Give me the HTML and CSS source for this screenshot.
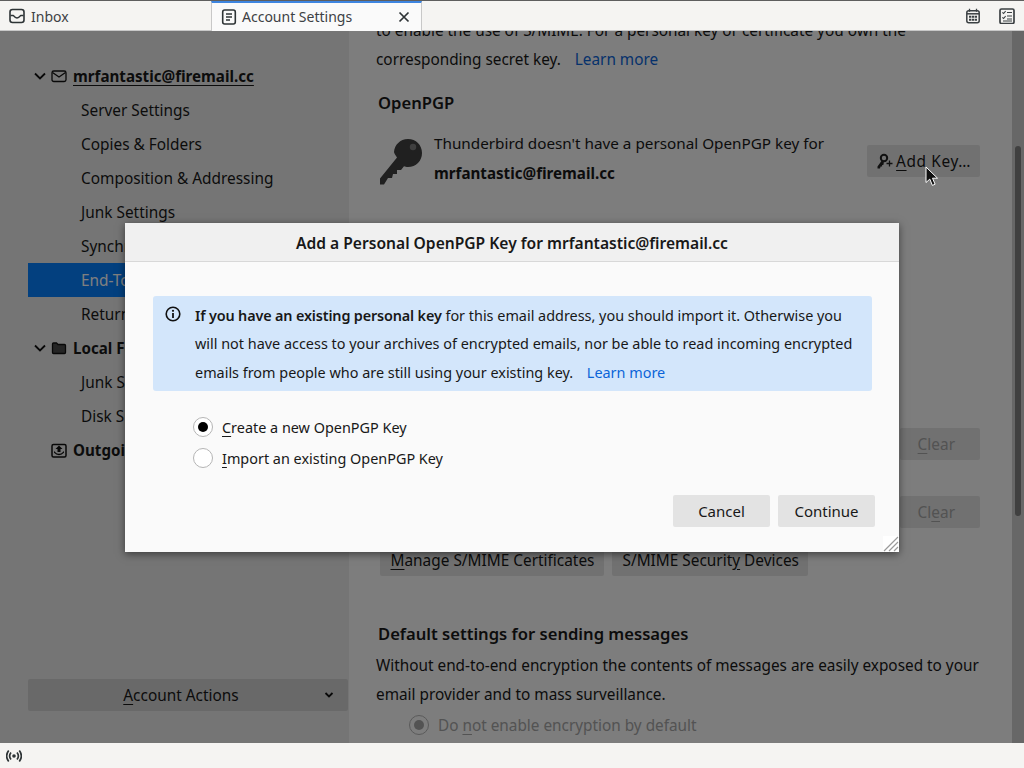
FILE: index.html
```html
<!DOCTYPE html>
<html>
<head>
    <title>Account Settings</title>
    <link rel="stylesheet" href="styles.css">
</head>
<body>
    <div class="tabbar">
        <div class="tab">
            <svg class="tab-icon" width="16" height="16" viewBox="0 0 16 16"><rect x="1" y="1.500" width="14" height="13" rx="2.500" fill="none" stroke="#2e3436" stroke-width="1.600"/><path d="M1.500 7.500h2.700c.8 0 1 2.500 3.800 2.500s3-2.500 3.800-2.500h2.700" fill="none" stroke="#2e3436" stroke-width="1.500"/></svg>
            <span>Inbox</span>
        </div>
        <div class="tab tab-active">
            <svg class="tab-icon" width="16" height="16" viewBox="0 0 16 16"><rect x="1.700" y="1" width="12.600" height="14" rx="2" fill="none" stroke="#2e3436" stroke-width="1.600"/><path d="M5 5h6M5 8h6M5 11h4" stroke="#2e3436" stroke-width="1.400"/></svg>
            <span class="tab-title">Account Settings</span>
            <svg class="tab-close" width="12" height="12" viewBox="0 0 12 12"><path d="M1.500 1.500l9 9M10.500 1.500l-9 9" stroke="#2e3436" stroke-width="1.700"/></svg>
        </div>
        <div class="tab-tools">
            <svg width="16" height="16" viewBox="0 0 16 16"><rect x="1.800" y="2.800" width="12.400" height="12" rx="2" fill="none" stroke="#3b4043" stroke-width="1.500"/><path d="M2 5.800h12" stroke="#3b4043" stroke-width="1.500"/><path d="M4.500 .8v3M11.500 .8v3" stroke="#3b4043" stroke-width="1.300"/><path d="M4 7.800h2.300v2H4zM6.900 7.800h2.300v2H6.900zM9.800 7.800H12v2H9.800zM4 10.700h2.300v2H4zM6.900 10.700h2.300v2H6.900zM9.800 10.700H12v2H9.800z" fill="#3b4043"/></svg>
            <svg width="16" height="16" viewBox="0 0 16 16"><rect x="1" y="1" width="14" height="14.500" rx="1.500" fill="none" stroke="#3b4043" stroke-width="1.700"/><path d="M3.400 4.300l1.200 1.200 2-2.300M3.400 9.300l1.200 1.200 2-2.300" fill="none" stroke="#3b4043" stroke-width="1.100"/><path d="M8 4.500h5M8 8h5M8 11h5M4 13h9" stroke="#3b4043" stroke-width="1.200"/></svg>
        </div>
    </div>

    <div class="content">
        <div class="sidebar">
            <div class="tree-row tree-account">
                <svg class="chevron" width="12" height="12" viewBox="0 0 12 12"><path d="M1 3.500l5 5 5-5" fill="none" stroke="#111" stroke-width="1.800"/></svg>
                <svg class="tree-icon" width="16" height="16" viewBox="0 0 16 16"><rect x="1" y="3" width="14" height="10.500" rx="1.800" fill="none" stroke="#111" stroke-width="1.300"/><path d="M1.500 4.500L8 9l6.500-4.500" fill="none" stroke="#111" stroke-width="1.300"/></svg>
                <u>mrfantastic@firemail.cc</u>
            </div>
            <div class="tree-row tree-sub">Server Settings</div>
            <div class="tree-row tree-sub">Copies &amp; Folders</div>
            <div class="tree-row tree-sub">Composition &amp; Addressing</div>
            <div class="tree-row tree-sub">Junk Settings</div>
            <div class="tree-row tree-sub">Synchronization &amp; Storage</div>
            <div class="tree-row tree-sub tree-selected">End-To-End Encryption</div>
            <div class="tree-row tree-sub">Return Receipts</div>
            <div class="tree-row tree-account">
                <svg class="chevron" width="12" height="12" viewBox="0 0 12 12"><path d="M1 3.500l5 5 5-5" fill="none" stroke="#111" stroke-width="1.800"/></svg>
                <svg class="tree-icon" width="16" height="16" viewBox="0 0 16 16"><path d="M1.500 4c0-.6.400-1 1-1h3l1.500 1.500h6.500c.6 0 1 .4 1 1v7c0 .6-.4 1-1 1h-11c-.6 0-1-.4-1-1z" fill="#4a4a4a" stroke="#111" stroke-width="1.300"/></svg>
                Local Folders
            </div>
            <div class="tree-row tree-sub">Junk Settings</div>
            <div class="tree-row tree-sub">Disk Space</div>
            <div class="tree-row tree-account">
                <span class="chevron"></span>
                <svg class="tree-icon" width="16" height="16" viewBox="0 0 16 16"><rect x="1" y="2.500" width="14" height="12.500" rx="1.500" fill="none" stroke="#111" stroke-width="1.500"/><path d="M8 3.500l3.500 3.500H9.500v3h-3V7H4.500z" fill="#111"/><path d="M3 10c1 0 1 2.500 5 2.500s4-2.500 5-2.500" fill="none" stroke="#111" stroke-width="1.300"/></svg>
                Outgoing Server (SMTP)
            </div>
            <div class="actions-btn">
                <span><u>A</u>ccount Actions</span>
                <svg class="actions-arrow" width="10" height="10" viewBox="0 0 10 10"><path d="M1.500 3l3.500 3.500L8.500 3" fill="none" stroke="#111" stroke-width="1.800"/></svg>
            </div>
        </div>

        <div class="main">
            <div class="pane">
                <p class="para">to enable the use of S/MIME. For a personal key or certificate you own the corresponding secret key. <a class="link">Learn more</a></p>
                <h3 class="pane-heading heading-pgp">OpenPGP</h3>
                <div class="pgp-row">
                    <svg class="pgp-key" width="44" height="46" viewBox="0 0 44 46"><path d="M29 0c8 0 14 6 14 14s-6 14-14 14c-1.500 0-3-.3-4-.7l-3 3.700h-4v4h-4l-1 4H9l-4 6.500H1v-6l17-21C16 15.500 15 14 15 13 15.500 6 21 0 29 0z" fill="#404040"/><circle cx="34" cy="8" r="3.200" fill="#808080"/></svg>
                    <div class="pgp-text">
                        Thunderbird doesn't have a personal OpenPGP key for<br>
                        <b>mrfantastic@firemail.cc</b>
                    </div>
                    <div class="btn btn-add">
                        <svg width="17" height="17" viewBox="0 0 17 17"><circle cx="8" cy="5" r="3.200" fill="none" stroke="#222" stroke-width="2"/><path d="M5.800 7.500L1.500 13.500v2H4l.6-2h1.500v-1.500h1.200l.6-2.500z" fill="#222"/><path d="M10.500 10.500h6M13.500 7.500v6" stroke="#222" stroke-width="1.300"/></svg>
                        <span class="add-label"><u>A</u>dd Key…</span>
                    </div>
                </div>
                <div class="clear-row clear-first"><div class="btn btn-off"><u>C</u>lear</div></div>
                <div class="clear-row clear-second"><div class="btn btn-off">Cl<u>e</u>ar</div></div>
                <div class="smime-btns">
                    <div class="btn"><span><u>M</u>anage S/MIME Certificates</span></div>
                    <div class="btn"><span>S/MIME Securit<u>y</u> Devices</span></div>
                </div>
                <h3 class="pane-heading heading-default">Default settings for sending messages</h3>
                <p class="para">Without end-to-end encryption the contents of messages are easily exposed to your email provider and to mass surveillance.</p>
                <div class="radio-row radio-off">
                    <span class="radio radio-on"></span>
                    <span>Do <u>n</u>ot enable encryption by default</span>
                </div>
            </div>
            <div class="scrollbar"><div class="scroll-thumb"></div></div>
        </div>

        <div class="backdrop">
            <div class="dialog">
                <div class="dialog-title">Add a Personal OpenPGP Key for mrfantastic@firemail.cc</div>
                <div class="dialog-body">
                    <div class="callout">
                        <svg class="callout-icon" width="16" height="16" viewBox="0 0 16 16"><circle cx="8" cy="8" r="6.800" fill="none" stroke="#111" stroke-width="1.600"/><circle cx="8" cy="4.800" r="1.100" fill="#111"/><path d="M8 7v5" stroke="#111" stroke-width="1.800"/></svg>
                        <div><b>If you have an existing personal key</b> for this email address, you should import it. Otherwise you will not have access to your archives of encrypted emails, nor be able to read incoming encrypted emails from people who are still using your existing key. <a class="link link-learn">Learn more</a></div>
                    </div>
                    <div class="radio-group">
                        <div class="radio-row">
                            <span class="radio radio-on"></span>
                            <span class="radio-label"><u>C</u>reate a new OpenPGP Key</span>
                        </div>
                        <div class="radio-row">
                            <span class="radio"></span>
                            <span class="radio-label"><u>I</u>mport an existing OpenPGP Key</span>
                        </div>
                    </div>
                    <div class="dialog-btns">
                        <div class="btn dialog-btn">Cancel</div>
                        <div class="btn dialog-btn">Continue</div>
                    </div>
                </div>
                <svg class="resizer" width="16" height="16" viewBox="0 0 16 16"><rect width="16" height="16" fill="#fff"/><path d="M1 15L15 1M6 15l9-9M11 15l4-4" stroke="#9a9a9a" stroke-width="1.200"/></svg>
            </div>
        </div>

        <svg class="cursor" width="14" height="21" viewBox="0 0 14 21"><path d="M1 1v15.500l3.800-3.400 2.600 6.300 2.700-1.200-2.600-6h5z" fill="#111" stroke="#fff" stroke-width="1"/></svg>
    </div>

    <div class="statusbar">
        <svg width="16" height="16" viewBox="0 0 16 16"><circle cx="8" cy="8" r="1.800" fill="#2e3436"/><path d="M5 4.500c-1.600 2-1.600 5 0 7M11 4.500c1.600 2 1.600 5 0 7M2.700 2.500c-2.600 3.400-2.600 7.600 0 11M13.300 2.500c2.600 3.400 2.600 7.600 0 11" fill="none" stroke="#2e3436" stroke-width="1.700"/></svg>
    </div>
</body>
</html>
```

FILE: styles.css
```css
body {
    margin: 0;
    width: 1024px;
    height: 768px;
    overflow: hidden;
    display: flex;
    flex-direction: column;
    font-family: "Noto Sans", sans-serif;
    font-size: 15.33px;
    color: #181818;
    background: #fafafa;
}

b {
    font-weight: 600;
}

u {
    text-underline-offset: 3px;
}

/* tabs */
.tabbar {
    height: 29px;
    display: flex;
    flex: none;
    font-size: 14px;
    background: #f5f4f2;
    border-top: 1px solid #5e5e5e;
    border-bottom: 1px solid #c8c8c8;
}

.tab {
    width: 211px;
    display: flex;
    align-items: center;
    padding-left: 9px;
    padding-top: 1px;
    box-sizing: border-box;
    color: #3d4144;
}

.tab-icon {
    margin-right: 6px;
}

.tab-active {
    width: 211px;
    padding-top: 0;
    padding-bottom: 1px;
    background: #fafafa;
    border-top: 2px solid #3d85e0;
    border-left: 1px solid #c8c8c8;
    border-right: 1px solid #c8c8c8;
    margin-bottom: -1px;
}

.tab-active .tab-icon {
    margin-right: 5px;
}

.tab-title {
    flex: 1;
}

.tab-close {
    margin-right: 11px;
}

.tab-tools {
    margin-left: auto;
    display: flex;
    align-items: center;
    gap: 18px;
    padding-right: 9px;
}

/* main area */
.content {
    flex: 1;
    display: flex;
    position: relative;
    overflow: hidden;
}

.sidebar {
    width: 349px;
    flex: none;
    box-sizing: border-box;
    padding: 28px 0 32px 28px;
    display: flex;
    flex-direction: column;
    font-size: 15.4px;
    background: #ebebeb;
}

.tree-row {
    height: 34px;
    display: flex;
    align-items: center;
    flex: none;
    white-space: nowrap;
}

.tree-account {
    font-size: 15.17px;
    font-weight: 700;
    padding-left: 6px;
}

.tree-sub {
    padding-left: 53px;
}

.tree-selected {
    background: #0780fe;
    color: #fff;
}

.chevron {
    width: 12px;
    margin-right: 5px;
}

.tree-icon {
    margin-right: 6px;
}

.actions-btn {
    margin-top: auto;
    height: 32px;
    width: 320px;
    box-sizing: border-box;
    padding-right: 14px;
    display: flex;
    align-items: center;
    justify-content: center;
    position: relative;
    background: #d2d2d2;
    border-radius: 2px;
}

.actions-arrow {
    position: absolute;
    right: 14px;
}

.main {
    flex: 1;
    display: flex;
    background: #fafafa;
    overflow: hidden;
}

.pane {
    flex: 1;
    box-sizing: border-box;
    padding: 0 32px 0 27px;
    margin-top: -15px;
}

.para {
    margin: 0;
    line-height: 29px;
}

.link {
    color: #0b64d8;
    margin-left: 10px;
}

.pane-heading {
    margin: 0 0 0 2px;
    font-size: 16.6px;
    font-weight: 600;
    line-height: 24px;
}

.heading-pgp {
    margin-top: 17px;
}

.heading-default {
    margin-top: 46px;
    margin-bottom: 5px;
}

.pgp-row {
    display: flex;
    align-items: flex-start;
    margin-top: 22px;
}

.pgp-key {
    margin: 2px 11px 0 3px;
}

.pgp-text {
    flex: 1;
    font-size: 15.27px;
    line-height: 30px;
    margin-top: -9px;
}

.pgp-text b {
    font-size: 15.17px;
    font-weight: 700;
}

.btn {
    height: 32px;
    display: flex;
    align-items: center;
    justify-content: center;
    box-sizing: border-box;
    padding: 0 9.5px 0 10.5px;
    font-size: 15.4px;
    background: #e3e3e3;
    border-radius: 2px;
    white-space: pre;
}

.btn-add {
    margin-top: 8px;
    padding: 0 9px;
    gap: 3px;
}

.add-label {
    letter-spacing: 0.6px;
}

.btn-off {
    padding: 0 25px 0 18px;
    color: #a6a6a6;
}

.clear-row {
    display: flex;
    justify-content: flex-end;
}

.clear-first {
    margin-top: 240px;
}

.clear-second {
    margin-top: 36px;
}

.smime-btns {
    display: flex;
    gap: 8px;
    margin: 16px 0 0 4px;
}

.radio-row {
    display: flex;
    align-items: center;
    gap: 9px;
}

.radio-off {
    color: #a6a6a6;
    margin: 6px 0 0 33px;
}

.radio {
    width: 20px;
    height: 20px;
    box-sizing: border-box;
    border: 1px solid #b5b5b5;
    border-radius: 50%;
    background: #fff;
    display: flex;
    align-items: center;
    justify-content: center;
}

.radio-on::after {
    content: "";
    width: 10px;
    height: 10px;
    border-radius: 50%;
    background: #000;
}

.radio-off .radio {
    background: #fafafa;
}

.radio-off .radio-on::after {
    background: #a6a6a6;
}

.scrollbar {
    width: 12px;
    flex: none;
    background: #cfcfcf;
}

.scroll-thumb {
    width: 6px;
    height: 370px;
    margin: 115px 0 0 3px;
    background: #808080;
    border-radius: 3px;
}

/* modal */
.backdrop {
    position: absolute;
    inset: 0;
    display: flex;
    align-items: center;
    justify-content: center;
    background: rgba(0, 0, 0, 0.5);
}

.dialog {
    width: 774px;
    height: 329px;
    position: relative;
    background: #fafafa;
    box-shadow: 0 2px 8px rgba(0, 0, 0, 0.5);
}

.dialog-title {
    height: 36px;
    padding-top: 2px;
    display: flex;
    align-items: center;
    justify-content: center;
    font-size: 15.6px;
    font-weight: 600;
    background: #f0f0f0;
    border-bottom: 1px solid #d8d8d8;
}

.dialog-body {
    padding: 34px 24px 0 28px;
    font-size: 14.42px;
}

.callout {
    width: 719px;
    height: 95px;
    box-sizing: border-box;
    padding: 6px 10px 0 12px;
    display: flex;
    gap: 14px;
    line-height: 28.5px;
    background: #d3e6fb;
    border-radius: 3px;
}

.callout b {
    letter-spacing: -0.15px;
}

.callout-icon {
    flex: none;
    margin-top: 4px;
}

.link-learn {
    margin-left: 10px;
}

.radio-group {
    display: flex;
    flex-direction: column;
    gap: 7px;
    margin: 24px 0 0 40px;
}

.radio-label {
    line-height: 22px;
    padding-top: 2px;
}

.dialog-btns {
    display: flex;
    justify-content: flex-end;
    gap: 8px;
    margin-top: 25px;
}

.dialog-btn {
    width: 97px;
    padding: 0;
    font-size: 15px;
}

.resizer {
    position: absolute;
    right: 0;
    bottom: 0;
}

.cursor {
    position: absolute;
    left: 925px;
    top: 135px;
}

.statusbar {
    height: 25px;
    flex: none;
    display: flex;
    align-items: center;
    padding-left: 6px;
    background: #f5f4f2;
}
```
